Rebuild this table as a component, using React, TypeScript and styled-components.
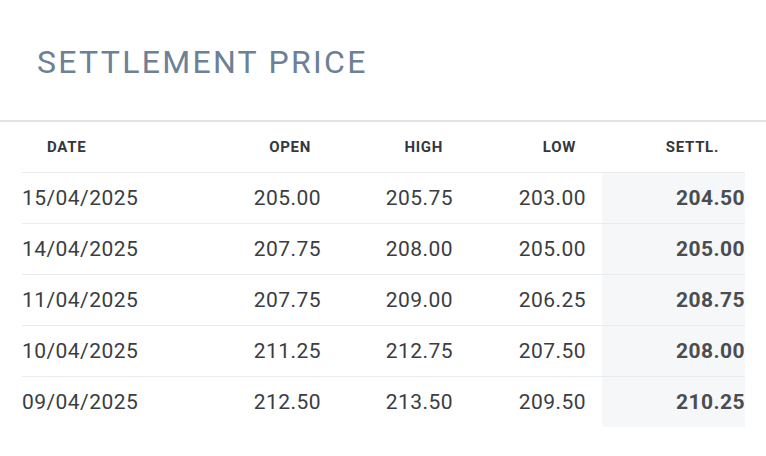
import React from "react";
import styled, { createGlobalStyle } from "styled-components";

const Global = createGlobalStyle`
  html, body { margin: 0; padding: 0; background: #ffffff; }
  body { font-family: Roboto, "Liberation Sans", sans-serif; }
`;

const Page = styled.div`
  width: 766px;
  height: 456px;
  overflow: hidden;
  background: #ffffff;
`;

const Title = styled.h1`
  margin: 0;
  padding: 42px 0 0 37px;
  height: 78px;
  box-sizing: border-box;
  font-family: Roboto, "Liberation Sans", sans-serif;
  font-weight: 400;
  font-size: 32px;
  line-height: 40px;
  letter-spacing: 2.3px;
  color: #6c8097;
`;

const TableWrap = styled.div`
  border-top: 2px solid #e3e3e3;
  margin-top: 42px;
`;

const Grid = styled.div`
  margin-left: 22px;
  width: 723px;
  display: grid;
  grid-template-columns: 168px 147px 132px 133px 143px;
`;

const HeadCell = styled.div<{ $left?: boolean }>`
  height: 50px;
  display: flex;
  align-items: center;
  justify-content: ${(p) => (p.$left ? "flex-start" : "flex-end")};
  padding: ${(p) => (p.$left ? "0 0 0 25px" : "0 26px 0 0")};
  font-size: 15px;
  font-weight: 700;
  letter-spacing: 0.7px;
  color: #333840;
`;

const Cell = styled.div<{ $left?: boolean; $settle?: boolean }>`
  height: 50px;
  border-top: 1px solid #e9ebee;
  display: flex;
  align-items: center;
  justify-content: ${(p) => (p.$left ? "flex-start" : "flex-end")};
  padding-right: ${(p) => (p.$left || p.$settle ? "0" : "16px")};
  font-size: 21px;
  letter-spacing: 0.45px;
  font-weight: ${(p) => (p.$settle ? 700 : 400)};
  color: ${(p) => (p.$settle ? "#4a4d52" : "#3a3d42")};
  background: ${(p) => (p.$settle ? "#f6f7f9" : "transparent")};
`;

const rows = [
  ["15/04/2025", "205.00", "205.75", "203.00", "204.50"],
  ["14/04/2025", "207.75", "208.00", "205.00", "205.00"],
  ["11/04/2025", "207.75", "209.00", "206.25", "208.75"],
  ["10/04/2025", "211.25", "212.75", "207.50", "208.00"],
  ["09/04/2025", "212.50", "213.50", "209.50", "210.25"],
];

export default function App() {
  return (
    <Page>
      <Global />
      <Title>SETTLEMENT PRICE</Title>
      <TableWrap>
        <Grid>
          <HeadCell $left>DATE</HeadCell>
          <HeadCell>OPEN</HeadCell>
          <HeadCell>HIGH</HeadCell>
          <HeadCell>LOW</HeadCell>
          <HeadCell>SETTL.</HeadCell>
          {rows.map((r) => (
            <React.Fragment key={r[0]}>
              <Cell $left>{r[0]}</Cell>
              <Cell>{r[1]}</Cell>
              <Cell>{r[2]}</Cell>
              <Cell>{r[3]}</Cell>
              <Cell $settle>{r[4]}</Cell>
            </React.Fragment>
          ))}
        </Grid>
      </TableWrap>
    </Page>
  );
}
